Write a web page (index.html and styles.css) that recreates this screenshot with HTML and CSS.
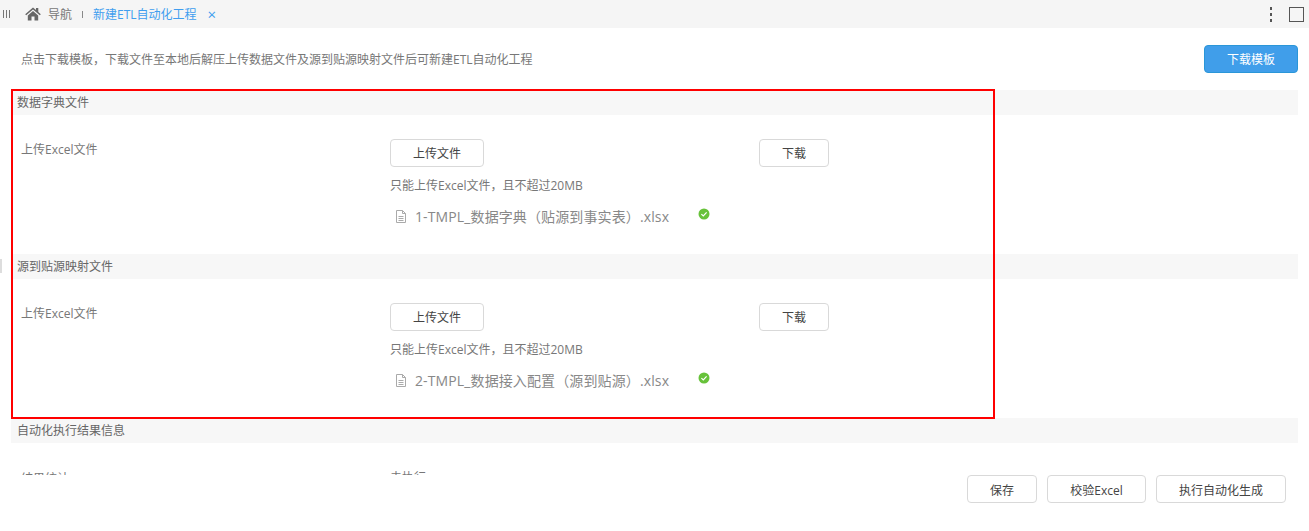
FILE: index.html
```html
<!DOCTYPE html>
<html lang="zh-CN">

<head>
    <meta charset="UTF-8">
    <title>新建ETL自动化工程</title>
    <link rel="stylesheet" href="styles.css">
</head>

<body>
    <div class="tabbar">
        <span class="tab-grip"><i></i><i></i><i></i></span>
        <svg class="home-icon" viewBox="0 0 16 14" width="16" height="14">
            <path d="M8 0.5 L0.2 7.2 L1.2 8.3 L8 2.5 L14.8 8.3 L15.8 7.2 L13.3 5 V1 H11 V3 Z" fill="#666"></path>
            <path d="M2.8 8.4 L8 4 L13.2 8.4 V13.6 H9.5 V9.6 H6.5 V13.6 H2.8 Z" fill="#666"></path>
        </svg>
        <span class="tab-nav">导航</span>
        <span class="tab-sep"></span>
        <span class="tab-active">新建ETL自动化工程</span>
        <span class="tab-close">×</span>
        <span class="tab-tools">
            <span class="dots"><i></i><i></i><i></i></span>
            <span class="max-box"></span>
        </span>
    </div>

    <div class="main">
        <div class="intro">
            <p>点击下载模板，下载文件至本地后解压上传数据文件及源到贴源映射文件后可新建ETL自动化工程</p>
            <button class="btn-primary">下载模板</button>
        </div>

        <div class="section-head">数据字典文件</div>
        <div class="section-body">
            <div class="row-label">上传Excel文件</div>
            <div class="row-upload">
                <button class="btn btn-upload">上传文件</button>
                <div class="hint">只能上传Excel文件，且不超过20MB</div>
                <div class="file-row">
                    <svg class="file-icon" viewBox="0 0 12 13" width="12" height="13">
                        <path d="M1.5 0.5 H7.5 L10.5 3.5 V12.5 H1.5 Z M7.5 0.5 V3.5 H10.5 M3.5 6.5 H8.5 M3.5 8.5 H8.5 M3.5 10.5 H8.5" fill="none" stroke="#aaa"></path>
                    </svg>
                    <span class="file-name">1-TMPL_数据字典（贴源到事实表）.xlsx</span>
                    <svg class="ok-icon" viewBox="0 0 12 12" width="12" height="12">
                        <circle cx="6" cy="6" r="5.5" fill="#67c23a"></circle>
                        <path d="M3.4 6.1 L5.3 7.9 L8.6 4.4" fill="none" stroke="#fff" stroke-width="1.2"></path>
                    </svg>
                </div>
            </div>
            <div class="row-down"><button class="btn btn-down">下载</button></div>
        </div>

        <div class="section-head">源到贴源映射文件</div>
        <div class="section-body">
            <div class="row-label">上传Excel文件</div>
            <div class="row-upload">
                <button class="btn btn-upload">上传文件</button>
                <div class="hint">只能上传Excel文件，且不超过20MB</div>
                <div class="file-row">
                    <svg class="file-icon" viewBox="0 0 12 13" width="12" height="13">
                        <path d="M1.5 0.5 H7.5 L10.5 3.5 V12.5 H1.5 Z M7.5 0.5 V3.5 H10.5 M3.5 6.5 H8.5 M3.5 8.5 H8.5 M3.5 10.5 H8.5" fill="none" stroke="#aaa"></path>
                    </svg>
                    <span class="file-name">2-TMPL_数据接入配置（源到贴源）.xlsx</span>
                    <svg class="ok-icon" viewBox="0 0 12 12" width="12" height="12">
                        <circle cx="6" cy="6" r="5.5" fill="#67c23a"></circle>
                        <path d="M3.4 6.1 L5.3 7.9 L8.6 4.4" fill="none" stroke="#fff" stroke-width="1.2"></path>
                    </svg>
                </div>
            </div>
            <div class="row-down"><button class="btn btn-down">下载</button></div>
        </div>

        <div class="section-head">自动化执行结果信息</div>
        <div class="section-body result">
            <div class="row-label">结果统计</div>
            <div class="row-upload">未执行</div>
        </div>

        <div class="red-box"></div>
        <div class="side-mark"></div>
    </div>

    <div class="footer">
        <button class="btn btn-save">保存</button>
        <button class="btn btn-check">校验Excel</button>
        <button class="btn btn-run">执行自动化生成</button>
    </div>
</body>

</html>
```

FILE: styles.css
```css
* {
    box-sizing: border-box;
}

html, body {
    height: 100%;
}

body {
    margin: 0;
    height: 531px;
    overflow: hidden;
    display: flex;
    flex-direction: column;
    background-color: #fff;
    color: #777;
    font-family: "Open Sans", "Noto Sans CJK SC", sans-serif;
    font-size: 12px;
}

button {
    font-family: inherit;
    font-size: 12px;
    cursor: pointer;
}

/* top tab bar */
.tabbar {
    height: 28px;
    flex: none;
    display: flex;
    align-items: center;
    background-color: #f5f5f5;
    padding-left: 3px;
}

.tab-grip {
    display: flex;
    gap: 2px;
    width: 22px;
}

.tab-grip i {
    width: 1px;
    height: 8px;
    background-color: #777;
}

.home-icon {
    margin-right: 7px;
}

.tab-sep {
    width: 1px;
    height: 7px;
    background-color: #888;
    margin: 0 10px;
}

.tab-active {
    color: #409eef;
}

.tab-close {
    color: #409eef;
    font-size: 15px;
    margin-left: 11px;
}

.tab-tools {
    margin-left: auto;
    display: flex;
    align-items: center;
    padding-right: 5px;
}

.dots {
    display: flex;
    flex-direction: column;
    gap: 3px;
    margin-right: 17px;
}

.dots i {
    width: 2px;
    height: 3px;
    background-color: #555;
}

.max-box {
    width: 15px;
    height: 15px;
    border: 1px solid #555;
}

/* page body */
.main {
    position: relative;
    height: 447px;
    flex: none;
    overflow: hidden;
    padding: 0 11px;
}

.intro {
    height: 62px;
    display: flex;
    align-items: center;
    justify-content: space-between;
    padding-left: 10px;
}

.intro p {
    margin: 0;
}

.btn-primary {
    width: 94px;
    height: 28px;
    background-color: #409eea;
    border: 1px solid #2a96d8;
    border-radius: 4px;
    color: #fff;
    padding: 0;
}

.section-head {
    height: 25px;
    line-height: 26px;
    background-color: #f7f7f7;
    padding-left: 6px;
    color: #666;
}

.section-body {
    height: 139px;
    display: flex;
    padding: 24px 0 0 10px;
}

.row-label {
    width: 369px;
    line-height: 22px;
    flex: none;
}

.row-upload {
    width: 369px;
    flex: none;
}

.btn {
    height: 28px;
    background-color: #fff;
    border: 1px solid #d9d9d9;
    border-radius: 4px;
    color: #444;
    padding: 0;
}

.btn-upload {
    width: 94px;
    display: block;
}

.btn-down {
    width: 70px;
}

.hint {
    margin-top: 10px;
    line-height: 18px;
}

.file-row {
    display: flex;
    align-items: center;
    margin-top: 11px;
    height: 20px;
    padding-left: 5px;
}

.file-name {
    font-size: 14px;
    letter-spacing: 0.12px;
    color: #888;
    margin-left: 8px;
    width: 283px;
    flex: none;
}

.ok-icon {
    position: relative;
    top: -2px;
}

.section-body.result {
    padding-top: 25px;
}

/* annotation drawn over the screenshot */
.red-box {
    position: absolute;
    left: 11px;
    top: 61px;
    width: 984px;
    height: 330px;
    border: 2px solid #f00;
}

.side-mark {
    position: absolute;
    left: 0;
    top: 231px;
    width: 2px;
    height: 14px;
    background-color: #ddd;
}

/* bottom actions */
.footer {
    flex: 1;
    display: flex;
    justify-content: flex-end;
    gap: 10px;
    padding-right: 23px;
    background-color: #fff;
}

.footer .btn {
    padding-top: 2px;
}

.btn-save {
    width: 70px;
}

.btn-check {
    width: 99px;
}

.btn-run {
    width: 130px;
}
```
